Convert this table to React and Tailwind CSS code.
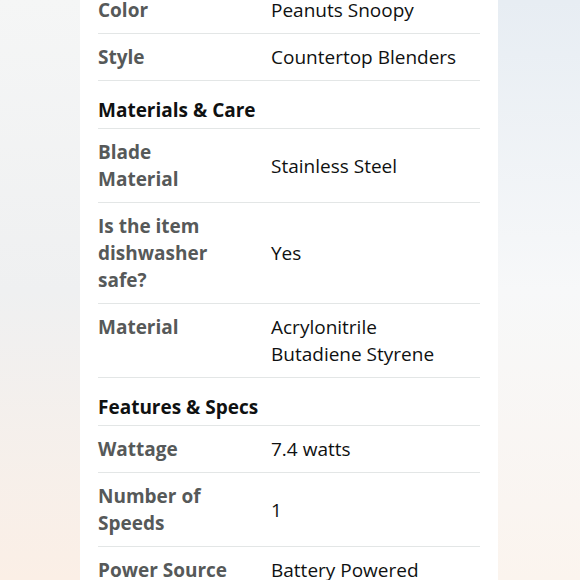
import React from 'react'

// Product details table, cropped mid-scroll
const sections = [
  {
    rows: [
      { label: ['Color'], value: ['Peanuts Snoopy'] },
      { label: ['Style'], value: ['Countertop Blenders'] },
    ],
  },
  {
    title: 'Materials & Care',
    rows: [
      { label: ['Blade', 'Material'], value: ['Stainless Steel'] },
      { label: ['Is the item', 'dishwasher', 'safe?'], value: ['Yes'] },
      { label: ['Material'], value: ['Acrylonitrile', 'Butadiene Styrene'] },
    ],
  },
  {
    title: 'Features & Specs',
    rows: [
      { label: ['Wattage'], value: ['7.4 watts'] },
      { label: ['Number of', 'Speeds'], value: ['1'] },
      { label: ['Power Source'], value: ['Battery Powered'] },
    ],
  },
]

function Lines({ lines }) {
  return lines.map((l, i) => (
    <React.Fragment key={i}>
      {i > 0 && <br />}
      {l}
    </React.Fragment>
  ))
}

export default function App() {
  return (
    <div
      className="w-[580px] h-[580px] overflow-hidden flex"
      style={{ fontFamily: '"Open Sans", "Noto Sans", sans-serif' }}
    >
      {/* blurred photo backdrop, left */}
      <div className="w-[80px] h-full bg-gradient-to-b from-[#f5f6f6] via-[#eff0f1] to-[#fbefe6]" />

      {/* Card */}
      <div className="w-[418px] h-full bg-white px-[18px]">
        <div className="mt-[-14px] border-t border-[#e3e6e6]">
          {sections.map((s, si) => (
            <div key={si}>
              {s.title && (
                <div className="pt-[16px] pb-[4px] border-b border-[#e3e6e6] text-[19px] leading-[27px] font-bold text-[#0f1111]">
                  {s.title}
                </div>
              )}
              {s.rows.map((r, ri) => (
                <div
                  key={ri}
                  className="grid grid-cols-[173px_1fr] pt-[10px] pb-[9px] border-b border-[#e3e6e6] text-[19px] leading-[27px]"
                >
                  <div className="self-start font-bold text-[#565959] pr-[20px]">
                    <Lines lines={r.label} />
                  </div>
                  <div className="self-center text-[#0f1111]">
                    <Lines lines={r.value} />
                  </div>
                </div>
              ))}
            </div>
          ))}
        </div>
      </div>

      {/* blurred photo backdrop, right */}
      <div className="flex-1 h-full bg-gradient-to-b from-[#e7edf3] via-[#f7f8f9] to-[#fbf4ee]" />
    </div>
  )
}
